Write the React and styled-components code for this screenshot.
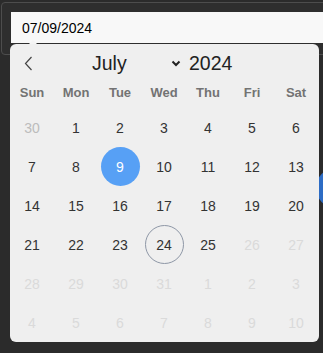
import React from "react";
import styled, { createGlobalStyle } from "styled-components";

const Global = createGlobalStyle`
  html, body { margin: 0; padding: 0; background: #2b2b2b; }
  body { font-family: "Liberation Sans", Arial, sans-serif; }
`;

const Page = styled.div`
  position: relative;
  width: 323px;
  height: 353px;
  overflow: hidden;
  padding: 2px 0 0 1px;
  box-sizing: border-box;
  background: #2b2b2b;
`;

const Field = styled.div`
  width: 360px;
  height: 53px;
  box-sizing: border-box;
  border: 1px solid #4d4d4d;
  border-radius: 4px;
  padding: 9px 0 0 9px;
  background: #2e2e2e;
`;

const Input = styled.div`
  height: 31px;
  background: #f8f8f8;
  padding-left: 11px;
  display: flex;
  align-items: center;
  font-size: 14px;
  color: #000;
`;

const BehindKnob = styled.div`
  position: absolute;
  left: 316px;
  top: 168px;
  width: 40px;
  height: 40px;
  border-radius: 50%;
  background: #2d6cc4;
`;

const Popup = styled.div`
  position: absolute;
  left: 10px;
  top: 44px;
  width: 309px;
  height: 298px;
  background: #efefef;
  border-radius: 6px;
  padding-top: 5px;
  box-sizing: border-box;
  z-index: 2;
  &::before {
    content: "";
    position: absolute;
    left: 19px;
    top: -4px;
    border-left: 4px solid transparent;
    border-right: 4px solid transparent;
    border-bottom: 4px solid #f4f4f4;
  }
`;

const Header = styled.div`
  height: 28px;
  display: flex;
  align-items: center;
  color: #222;
  font-size: 19.5px;
`;

const NavButton = styled.div`
  width: 36px;
  display: flex;
  justify-content: center;
`;

const MonthSelect = styled.div`
  display: flex;
  align-items: center;
  margin-left: 46px;
  width: 89px;
  justify-content: space-between;
`;

const Year = styled.div`
  margin-left: 8px;
`;

const Grid = styled.div`
  display: grid;
  grid-template-columns: repeat(7, 44px);
`;

const WeekDay = styled.div`
  height: 31px;
  display: flex;
  align-items: center;
  justify-content: center;
  font-size: 13px;
  font-weight: bold;
  color: #737373;
`;

const Cell = styled.div`
  height: 39px;
  display: flex;
  align-items: center;
  justify-content: center;
`;

const colors = { cur: "#333", prev: "#bcbcbc", dis: "#dadada" };

const Day = styled.div`
  width: 39px;
  height: 39px;
  box-sizing: border-box;
  border-radius: 50%;
  display: flex;
  align-items: center;
  justify-content: center;
  font-size: 14px;
  color: ${(p) => (p.$selected ? "#fff" : colors[p.$kind])};
  background: ${(p) => (p.$selected ? "#57a0f5" : "transparent")};
  border: ${(p) => (p.$today ? "1px solid #8e97a6" : "none")};
`;

const weekdays = ["Sun", "Mon", "Tue", "Wed", "Thu", "Fri", "Sat"];

const days = [];
days.push({ n: 30, kind: "prev" });
for (let i = 1; i <= 31; i++) days.push({ n: i, kind: i <= 25 ? "cur" : "dis" });
for (let i = 1; i <= 10; i++) days.push({ n: i, kind: "dis" });

export default function App() {
  return (
    <>
      <Global />
      <Page>
        <Field>
          <Input>07/09/2024</Input>
        </Field>
        <BehindKnob />
        <Popup>
          <Header>
            <NavButton>
              <svg width="9" height="15" viewBox="0 0 9 15">
                <polyline points="7.5,1 1.5,7.5 7.5,14" fill="none" stroke="#444" strokeWidth="1.2" />
              </svg>
            </NavButton>
            <MonthSelect>
              <span>July</span>
              <svg width="10" height="7" viewBox="0 0 10 7">
                <polyline points="1.5,1.5 5,5 8.5,1.5" fill="none" stroke="#222" strokeWidth="2" />
              </svg>
            </MonthSelect>
            <Year>2024</Year>
          </Header>
          <Grid>
            {weekdays.map((w) => (
              <WeekDay key={w}>{w}</WeekDay>
            ))}
            {days.map((d, i) => (
              <Cell key={i}>
                <Day
                  $kind={d.kind}
                  $selected={d.kind === "cur" && d.n === 9}
                  $today={d.kind === "cur" && d.n === 24}
                >
                  {d.n}
                </Day>
              </Cell>
            ))}
          </Grid>
        </Popup>
      </Page>
    </>
  );
}
